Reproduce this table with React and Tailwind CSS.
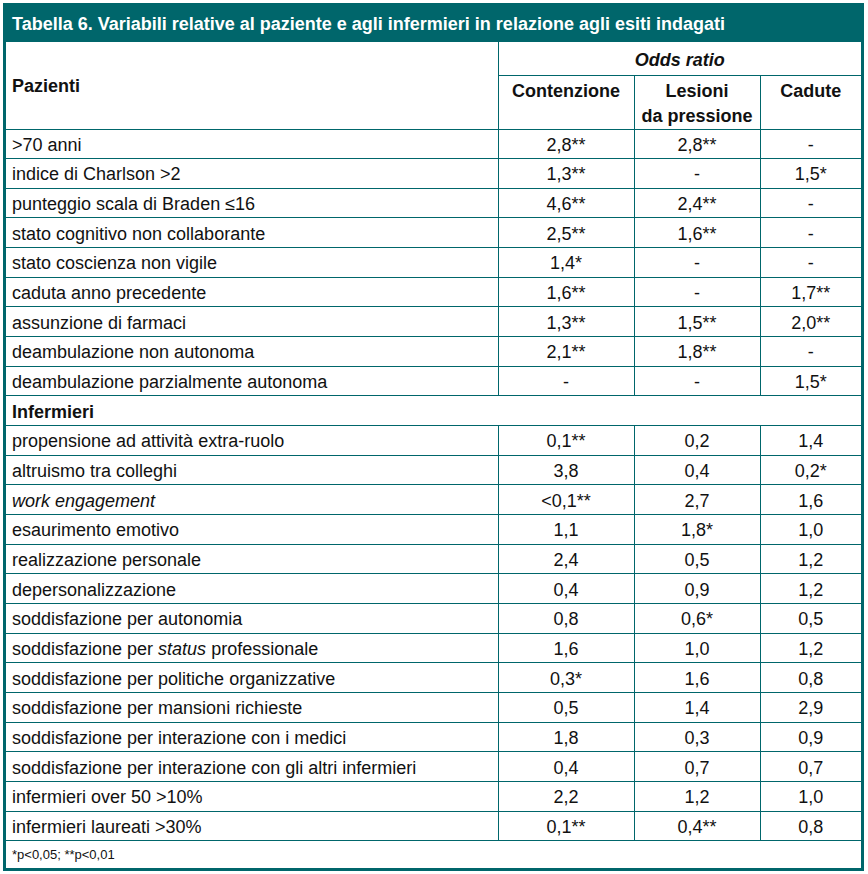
import React from "react";

const pazienti = [
  [">70 anni", "2,8**", "2,8**", "-"],
  ["indice di Charlson >2", "1,3**", "-", "1,5*"],
  ["punteggio scala di Braden ≤16", "4,6**", "2,4**", "-"],
  ["stato cognitivo non collaborante", "2,5**", "1,6**", "-"],
  ["stato coscienza non vigile", "1,4*", "-", "-"],
  ["caduta anno precedente", "1,6**", "-", "1,7**"],
  ["assunzione di farmaci", "1,3**", "1,5**", "2,0**"],
  ["deambulazione non autonoma", "2,1**", "1,8**", "-"],
  ["deambulazione parzialmente autonoma", "-", "-", "1,5*"],
];

const infermieri = [
  ["propensione ad attività extra-ruolo", "0,1**", "0,2", "1,4"],
  ["altruismo tra colleghi", "3,8", "0,4", "0,2*"],
  [<i key="w">work engagement</i>, "<0,1**", "2,7", "1,6"],
  ["esaurimento emotivo", "1,1", "1,8*", "1,0"],
  ["realizzazione personale", "2,4", "0,5", "1,2"],
  ["depersonalizzazione", "0,4", "0,9", "1,2"],
  ["soddisfazione per autonomia", "0,8", "0,6*", "0,5"],
  [
    <span key="s">
      soddisfazione per <i>status</i> professionale
    </span>,
    "1,6",
    "1,0",
    "1,2",
  ],
  ["soddisfazione per politiche organizzative", "0,3*", "1,6", "0,8"],
  ["soddisfazione per mansioni richieste", "0,5", "1,4", "2,9"],
  ["soddisfazione per interazione con i medici", "1,8", "0,3", "0,9"],
  ["soddisfazione per interazione con gli altri infermieri", "0,4", "0,7", "0,7"],
  ["infermieri over 50 >10%", "2,2", "1,2", "1,0"],
  ["infermieri laureati >30%", "0,1**", "0,4**", "0,8"],
];

const Row = ({ cells }) => (
  <tr className="h-[29.67px]">
    <td className="border-b border-[#00666b] pl-[6px] pt-[2px] align-middle">{cells[0]}</td>
    {cells.slice(1).map((c, i) => (
      <td key={i} className="border-b border-l border-[#00666b] pt-[2px] text-center align-middle">
        {c}
      </td>
    ))}
  </tr>
);

export default function App() {
  return (
    <div className="bg-white w-[868px] h-[874px] pt-[3px] pl-[3px] font-['Liberation_Sans',Arial,sans-serif]">
      <div className="w-[861px] h-[868px] border-[3px] border-t-0 border-[#00666b] text-[#111] text-[18px] leading-[22px]">
        <div className="h-[39px] bg-[#00666b] text-white font-bold text-[18px] pl-[6px] pt-[2px] flex items-center">
          Tabella 6. Variabili relative al paziente e agli infermieri in relazione agli esiti indagati
        </div>
        <table className="table-fixed border-collapse w-[855px]">
          <colgroup>
            <col className="w-[492px]" />
            <col className="w-[136px]" />
            <col className="w-[126px]" />
            <col className="w-[101px]" />
          </colgroup>
          <tbody>
            <tr className="h-[33px]">
              <td rowSpan={2} className="border-b border-[#00666b] pl-[6px] pt-[2px] font-bold align-middle">
                Pazienti
              </td>
              <td colSpan={3} className="border-b border-l border-[#00666b] text-center font-bold italic align-middle pt-[4px]">
                Odds ratio
              </td>
            </tr>
            <tr className="h-[54px]">
              <td className="border-b border-l border-[#00666b] text-center font-bold align-top pt-[3px] leading-[25px]">
                Contenzione
              </td>
              <td className="border-b border-l border-[#00666b] text-center font-bold align-top pt-[3px] leading-[25px]">
                Lesioni
                <br />
                da pressione
              </td>
              <td className="border-b border-l border-[#00666b] text-center font-bold align-top pt-[3px] leading-[25px]">
                Cadute
              </td>
            </tr>
            {pazienti.map((r, i) => (
              <Row key={"p" + i} cells={r} />
            ))}
            <tr className="h-[29.67px]">
              <td colSpan={4} className="border-b border-[#00666b] pl-[6px] pt-[2px] font-bold align-middle">
                Infermieri
              </td>
            </tr>
            {infermieri.map((r, i) => (
              <Row key={"i" + i} cells={r} />
            ))}
            <tr className="h-[26px]">
              <td colSpan={4} className="pl-[6px] pt-[2px] text-[13px] align-middle">
                *p&lt;0,05; **p&lt;0,01
              </td>
            </tr>
          </tbody>
        </table>
      </div>
    </div>
  );
}
